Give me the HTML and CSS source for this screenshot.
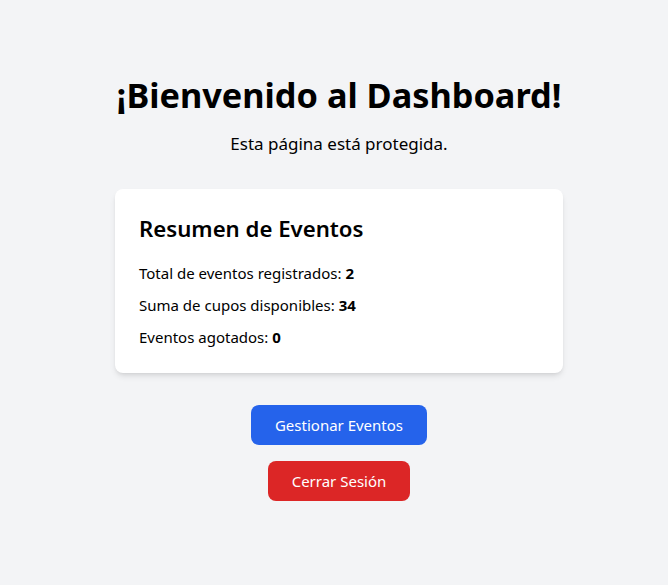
FILE: index.html
```html
<!DOCTYPE html>
<html lang="es">
<head>
<meta charset="utf-8">
<title>Dashboard</title>
<link rel="stylesheet" href="styles.css">
</head>
<body>
<main class="page">
  <h1 class="title">¡Bienvenido al Dashboard!</h1>
  <p class="subtitle">Esta página está protegida.</p>
  <section class="card">
    <h2 class="card-title">Resumen de Eventos</h2>
    <ul class="stats">
      <li>Total de eventos registrados: <strong>2</strong></li>
      <li>Suma de cupos disponibles: <strong>34</strong></li>
      <li>Eventos agotados: <strong>0</strong></li>
    </ul>
  </section>
  <div class="actions">
    <button class="btn btn-blue">Gestionar Eventos</button>
    <button class="btn btn-red">Cerrar Sesión</button>
  </div>
</main>
</body>
</html>
```

FILE: styles.css
```css
* { box-sizing: border-box; }
html, body { margin: 0; padding: 0; }
body {
  background: #f3f4f6;
  font-family: "Noto Sans", "Open Sans", sans-serif;
  color: #000;
  min-height: 585px;
}
.page {
  display: flex;
  flex-direction: column;
  align-items: center;
  padding-top: 75px;
  padding-left: 10px;
}
.title {
  margin: 0;
  font-size: 34.3px;
  line-height: 40px;
  font-weight: 700;
}
.subtitle {
  margin: 15px 0 0;
  font-size: 17px;
  line-height: 28px;
}
.card {
  margin-top: 31px;
  width: 448px;
  background: #fff;
  border-radius: 8px;
  padding: 24px;
  box-shadow: 0 4px 6px -1px rgba(0,0,0,0.1), 0 2px 4px -2px rgba(0,0,0,0.1);
}
.card-title {
  margin: 0 0 16px;
  font-size: 22.2px;
  line-height: 32px;
  font-weight: 600;
}
.stats {
  list-style: none;
  margin: 0;
  padding: 0;
  display: flex;
  flex-direction: column;
  gap: 8px;
  font-size: 15px;
  line-height: 24px;
}
.stats strong { font-weight: 700; }
.actions {
  margin-top: 32px;
  display: flex;
  flex-direction: column;
  align-items: center;
  gap: 16px;
}
.btn {
  border: none;
  border-radius: 8px;
  padding: 8px 24px;
  font-family: inherit;
  font-size: 15px;
  line-height: 24px;
  color: #fff;
  cursor: pointer;
}
.btn-blue { background: #2563eb; }
.btn-red { background: #dc2626; }
```
